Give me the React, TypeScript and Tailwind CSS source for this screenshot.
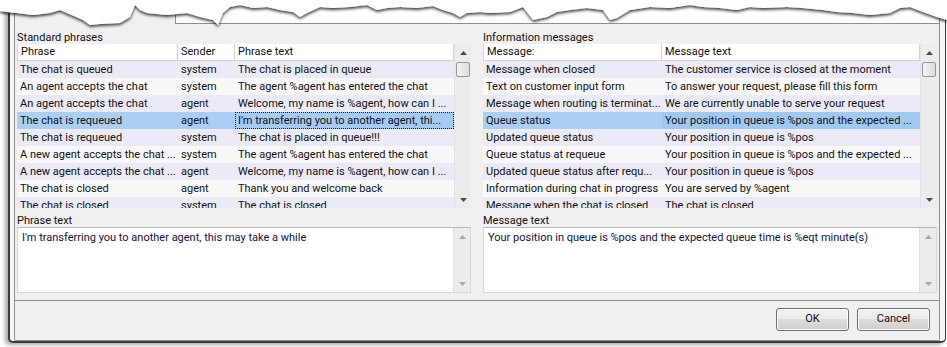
import type { ReactNode } from 'react';

const LEFT_COLS = ['w-[161px]', 'w-[57px]', 'w-[219px]'];
const RIGHT_COLS = ['w-[179px]', 'w-[258px]'];

const LEFT_HEAD = ['Phrase', 'Sender', 'Phrase text'];
const RIGHT_HEAD = ['Message:', 'Message text'];

const LEFT_ROWS = [
  ['The chat is queued', 'system', 'The chat is placed in queue'],
  ['An agent accepts the chat', 'system', 'The agent %agent has entered the chat'],
  ['An agent accepts the chat', 'agent', 'Welcome, my name is %agent, how can I ...'],
  ['The chat is requeued', 'agent', "I'm transferring you to another agent, thi..."],
  ['The chat is requeued', 'system', 'The chat is placed in queue!!!'],
  ['A new agent accepts the chat ...', 'system', 'The agent %agent has entered the chat'],
  ['A new agent accepts the chat ...', 'agent', 'Welcome, my name is %agent, how can I ...'],
  ['The chat is closed', 'agent', 'Thank you and welcome back'],
  ['The chat is closed', 'system', 'The chat is closed'],
];

const RIGHT_ROWS = [
  ['Message when closed', 'The customer service is closed at the moment'],
  ['Text on customer input form', 'To answer your request, please fill this form'],
  ['Message when routing is terminat...', 'We are currently unable to serve your request'],
  ['Queue status', 'Your position in queue is %pos and the expected ...'],
  ['Updated queue status', 'Your position in queue is %pos'],
  ['Queue status at requeue', 'Your position in queue is %pos and the expected ...'],
  ['Updated queue status after requ...', 'Your position in queue is %pos'],
  ['Information during chat in progress', 'You are served by %agent'],
  ['Message when the chat is closed', 'The chat is closed'],
];

// kanten på det "avrevne" skjermbildet øverst
const TEAR: [number, number][] = [
  [0, 11], [7, 12], [17, 13], [33, 15], [50, 13], [60, 10], [67, 13], [83, 20], [90, 25],
  [100, 24], [120, 23], [130, 17], [135, 5], [140, 10], [147, 13], [167, 15], [187, 13],
  [200, 17], [213, 20], [218, 25], [223, 13], [230, 7], [240, 5], [253, 8], [267, 7],
  [280, 10], [293, 12], [300, 17], [307, 13], [320, 7], [333, 8], [350, 7], [367, 5],
  [377, 10], [387, 8], [400, 7], [417, 8], [433, 6], [443, 10], [453, 13], [460, 17],
  [467, 13], [480, 12], [490, 13], [510, 12], [523, 7], [533, 20], [547, 17], [557, 12],
  [570, 10], [587, 8], [603, 10], [610, 20], [617, 18], [630, 10], [650, 7], [670, 8],
  [690, 5], [703, 7], [720, 8], [737, 10], [750, 7], [763, 8], [787, 7], [803, 8],
  [823, 10], [837, 12], [853, 13], [870, 15], [890, 13], [900, 8], [910, 7], [923, 12],
  [937, 17], [947, 20],
];

function Arrow({ up, color }: { up: boolean; color: string }) {
  return (
    <svg width="7" height="4" viewBox="0 0 7 4">
      <path d={up ? 'M0 4 L3.5 0 L7 4 Z' : 'M0 0 L3.5 4 L7 0 Z'} fill={color} />
    </svg>
  );
}

function VScroll({ thumb, disabled }: { thumb?: boolean; disabled?: boolean }) {
  const c = disabled ? '#a9a9a9' : '#4a4a4a';
  return (
    <div className="w-[17px] h-full shrink-0 flex flex-col bg-[#ececec] border-l border-[#e2e2e2]">
      <div className="h-[17px] flex items-center justify-center">
        <Arrow up color={c} />
      </div>
      {thumb && (
        <div className="mx-[1px] mt-[1px] h-[15px] rounded-[2px] border border-[#979797] bg-[linear-gradient(to_right,#f4f4f4,#e8e8e8_50%,#dcdcdc)]" />
      )}
      <div className="flex-1" />
      <div className="h-[17px] flex items-center justify-center">
        <Arrow up={false} color={c} />
      </div>
    </div>
  );
}

function Grid({
  cols,
  head,
  rows,
  selected,
  focusCol,
  dotted,
}: {
  cols: string[];
  head: string[];
  rows: string[][];
  selected: number;
  focusCol: number;
  dotted?: boolean;
}) {
  return (
    <div className="h-[164px] flex overflow-hidden">
      <div className="flex-1 overflow-hidden">
        <div className="flex h-[17px] bg-white">
          {head.map((h, i) => (
            <div
              key={h}
              className={`${cols[i]} shrink-0 h-[17px] leading-[16px] pl-[3px] border-r border-b border-[#d5d5d5] ${i === 0 ? 'border-l' : ''}`}
            >
              {h}
            </div>
          ))}
        </div>
        {rows.map((r, ri) => {
          const isSel = ri === selected;
          const bg = isSel ? 'bg-[#abcff4]' : ri % 2 === 0 ? 'bg-[#ebebf7]' : 'bg-[#f8f8f8]';
          return (
            <div key={ri} className={`flex h-[17px] ${bg}`}>
              {r.map((t, ci) => {
                const focus = isSel && ci === focusCol;
                let cls = 'pl-[3px] leading-[17px]';
                if (focus && dotted) {
                  cls = 'border border-dotted border-[#202020] pl-[2px] leading-[15px] bg-[#a3cbf3]';
                } else if (focus) {
                  cls = 'pl-[3px] leading-[17px] bg-[#a0c9f2]';
                }
                return (
                  <div
                    key={ci}
                    className={`${cols[ci]} shrink-0 h-[17px] whitespace-nowrap overflow-hidden ${cls}`}
                  >
                    {t}
                  </div>
                );
              })}
            </div>
          );
        })}
      </div>
      <VScroll thumb />
    </div>
  );
}

function TextBox({ children }: { children: ReactNode }) {
  return (
    <div className="h-[66px] flex bg-white border border-[#d6d9de] border-t-[#b6b9bf]">
      <div className="flex-1 pl-[4px] pt-[3px] leading-[14px] text-[#12123a]">{children}</div>
      <VScroll disabled />
    </div>
  );
}

function Section({
  title,
  textTitle,
  children,
  text,
}: {
  title: string;
  textTitle: string;
  children: ReactNode;
  text: string;
}) {
  return (
    <div className="w-[454px] shrink-0 pt-[7px]">
      <div className="leading-[13px] h-[13px]">{title}</div>
      {children}
      <div className="pt-[7px] leading-[12px] h-[19px]">{textTitle}</div>
      <TextBox>{text}</TextBox>
    </div>
  );
}

function Btn({ label }: { label: string }) {
  return (
    <button className="w-[73px] h-[23px] rounded-[3px] border border-[#707070] shadow-[inset_0_0_0_1px_#fbfbfb] bg-[linear-gradient(to_bottom,#f2f2f2_0%,#ebebeb_50%,#dddddd_50%,#cfcfcf_100%)] text-[11px] text-[#111]">
      {label}
    </button>
  );
}

function Tear() {
  const d =
    'M0,0 L947,0 ' +
    [...TEAR]
      .reverse()
      .map(([x, y]) => `L${x},${y}`)
      .join(' ') +
    ' Z';
  return (
    <svg className="absolute left-0 top-0" width="947" height="40" viewBox="0 0 947 40">
      <defs>
        <filter id="tearShadow" x="-5%" y="-50%" width="110%" height="220%">
          <feDropShadow dx="0" dy="2" stdDeviation="1.6" floodColor="#000" floodOpacity="0.75" />
        </filter>
      </defs>
      <path d={d} fill="#fff" filter="url(#tearShadow)" />
    </svg>
  );
}

export default function App() {
  return (
    <div className="relative w-[947px] h-[347px] overflow-hidden bg-white font-['Roboto',sans-serif] text-[11px] text-[#111]">
      {/* vinduet */}
      <div className="ml-[8px] w-[938px] h-[343px] border-l-2 border-r border-b-2 border-[#3b3b3b] rounded-b-[5px] bg-[#f6f6f6] shadow-[-3px_2px_4px_rgba(0,0,0,0.35)] pl-[4px] pr-[5px]">
        <div className="h-[341px] flex flex-col border-l border-r border-b border-[#8e8f8f] rounded-b-[2px] bg-[#f0f0f0]">
          {/* fanelinje */}
          <div className="h-[24px] flex">
            <div className="w-[161px] border-r border-[#8e8f8f]" />
            <div className="flex-1 bg-white border-b border-[#8e8f8f]" />
          </div>

          {/* faneside */}
          <div className="h-[277px] flex gap-[12px] px-[2px] border-b border-[#8e8f8f]">
            <Section
              title="Standard phrases"
              textTitle="Phrase text"
              text="I'm transferring you to another agent, this may take a while"
            >
              <Grid cols={LEFT_COLS} head={LEFT_HEAD} rows={LEFT_ROWS} selected={3} focusCol={2} dotted />
            </Section>
            <Section
              title="Information messages"
              textTitle="Message text"
              text="Your position in queue is %pos and the expected queue time is %eqt minute(s)"
            >
              <Grid cols={RIGHT_COLS} head={RIGHT_HEAD} rows={RIGHT_ROWS} selected={3} focusCol={1} />
            </Section>
          </div>

          {/* knapper */}
          <div className="flex-1 flex justify-end items-start gap-[8px] pt-[7px] pr-[9px]">
            <Btn label="OK" />
            <Btn label="Cancel" />
          </div>
        </div>
      </div>
      <Tear />
    </div>
  );
}
